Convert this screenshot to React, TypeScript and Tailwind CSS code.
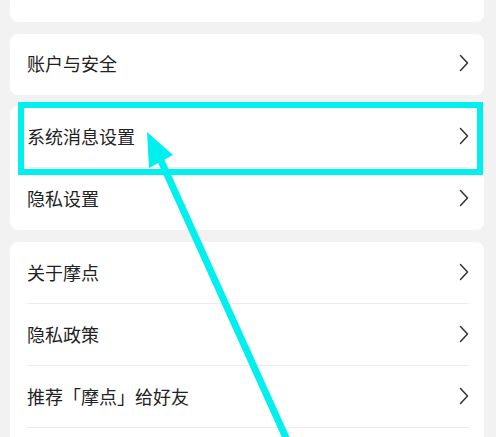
import React from "react"

const font = { fontFamily: '"Noto Sans CJK SC", "Noto Sans", sans-serif' }

function Chevron() {
  return (
    <svg width="10" height="18" viewBox="0 0 10 18" fill="none" className="shrink-0">
      <path d="M1.5 1.5 L8.5 9 L1.5 16.5" stroke="#333" strokeWidth="1.5" strokeLinejoin="round" strokeLinecap="round" />
    </svg>
  )
}

function Row({ label, divider }: { label: string; divider?: boolean }) {
  return (
    <div className="h-[62px] ml-[17px] mr-[15px] pb-[3px] flex items-center justify-between relative">
      <span className="text-[18px] text-[#222] leading-none">{label}</span>
      <Chevron />
      {divider && <div className="absolute left-0 right-0 bottom-0 h-px bg-[#ececec]" />}
    </div>
  )
}

export default function App() {
  return (
    <div style={font} className="w-[496px] h-[437px] overflow-hidden bg-[#f2f2f2] relative">
      <div className="pl-[10px] pr-[12px] -mt-[40px] flex flex-col">
        <div className="bg-white rounded-lg">
          <Row label="通用设置" />
        </div>

        <div className="bg-white rounded-lg mt-[12px] h-[61px] flex flex-col justify-center">
          <Row label="账户与安全" />
        </div>

        <div className="bg-white rounded-lg mt-[11px]">
          <Row label="系统消息设置" divider />
          <Row label="隐私设置" />
        </div>

        <div className="bg-white rounded-lg mt-[12px]">
          <Row label="关于摩点" divider />
          <Row label="隐私政策" divider />
          <Row label="推荐「摩点」给好友" divider />
          <Row label="清除缓存" />
        </div>
      </div>

      {/* highlight + arrow overlay */}
      <svg className="absolute inset-0 pointer-events-none" width="496" height="437" viewBox="0 0 496 437">
        <rect x="21" y="105" width="459" height="67" fill="none" stroke="#00f0f0" strokeWidth="6" />
        <line x1="287" y1="440" x2="157" y2="152" stroke="#00f0f0" strokeWidth="7" />
        <polygon points="147,132 149,168 173,155" fill="#00f0f0" />
      </svg>
    </div>
  )
}
